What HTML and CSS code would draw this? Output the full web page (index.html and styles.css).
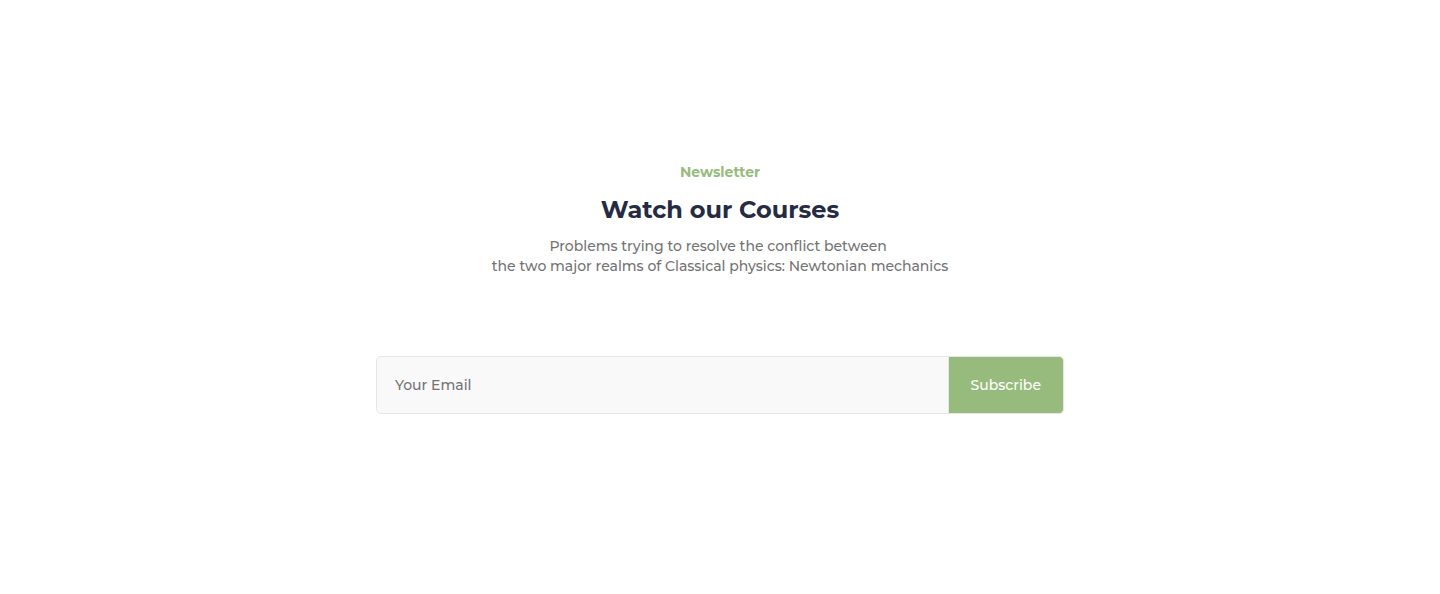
FILE: index.html
```html
<!DOCTYPE html>
<html lang="en">
<head>
<meta charset="utf-8">
<meta name="viewport" content="width=device-width, initial-scale=1">
<title>Newsletter</title>
<link rel="stylesheet" href="styles.css">
</head>
<body>
<main class="newsletter">
  <header class="intro">
    <p class="eyebrow">Newsletter</p>
    <h1 class="title">Watch our Courses</h1>
    <p class="lead">Problems trying to resolve the conflict between&nbsp;<br>the two major realms of Classical physics: Newtonian mechanics</p>
  </header>
  <form class="signup">
    <input class="email" type="email" placeholder="Your Email" aria-label="Your Email">
    <button class="subscribe" type="submit">Subscribe</button>
  </form>
</main>
</body>
</html>
```
FILE: styles.css
```css
* {
  box-sizing: border-box;
}

body {
  margin: 0;
  background: #fff;
  font-family: Montserrat, Inter, "Open Sans", sans-serif;
  font-size: 14px;
  font-weight: 500;
  line-height: 20px;
}

.newsletter {
  display: flex;
  flex-direction: column;
  align-items: center;
  gap: 80px;
  padding: 160px 24px;
}

.intro {
  display: flex;
  flex-direction: column;
  gap: 10px;
  text-align: center;
}

.eyebrow,
.title,
.lead {
  margin: 0;
}

.eyebrow {
  color: #96bb7c;
  font-weight: 700;
  line-height: 24px;
}

.title {
  color: #252b42;
  font-size: 24px;
  font-weight: 700;
  line-height: 32px;
}

.lead {
  color: #737373;
}

.signup {
  display: flex;
  width: 100%;
  max-width: 688px;
}

.email,
.subscribe {
  border: 1px solid #e6e6e6;
  font: inherit;
}

.email {
  flex: 1;
  min-width: 0;
  padding: 18px;
  border-radius: 5px 0 0 5px;
  background: #f9f9f9;
  color: #252b42;
}

.email::placeholder {
  color: #737373;
  opacity: 1;
}

.subscribe {
  padding: 18px 22px;
  border-left: 0;
  border-radius: 0 5px 5px 0;
  background: #96bb7c;
  color: #fff;
}
```
